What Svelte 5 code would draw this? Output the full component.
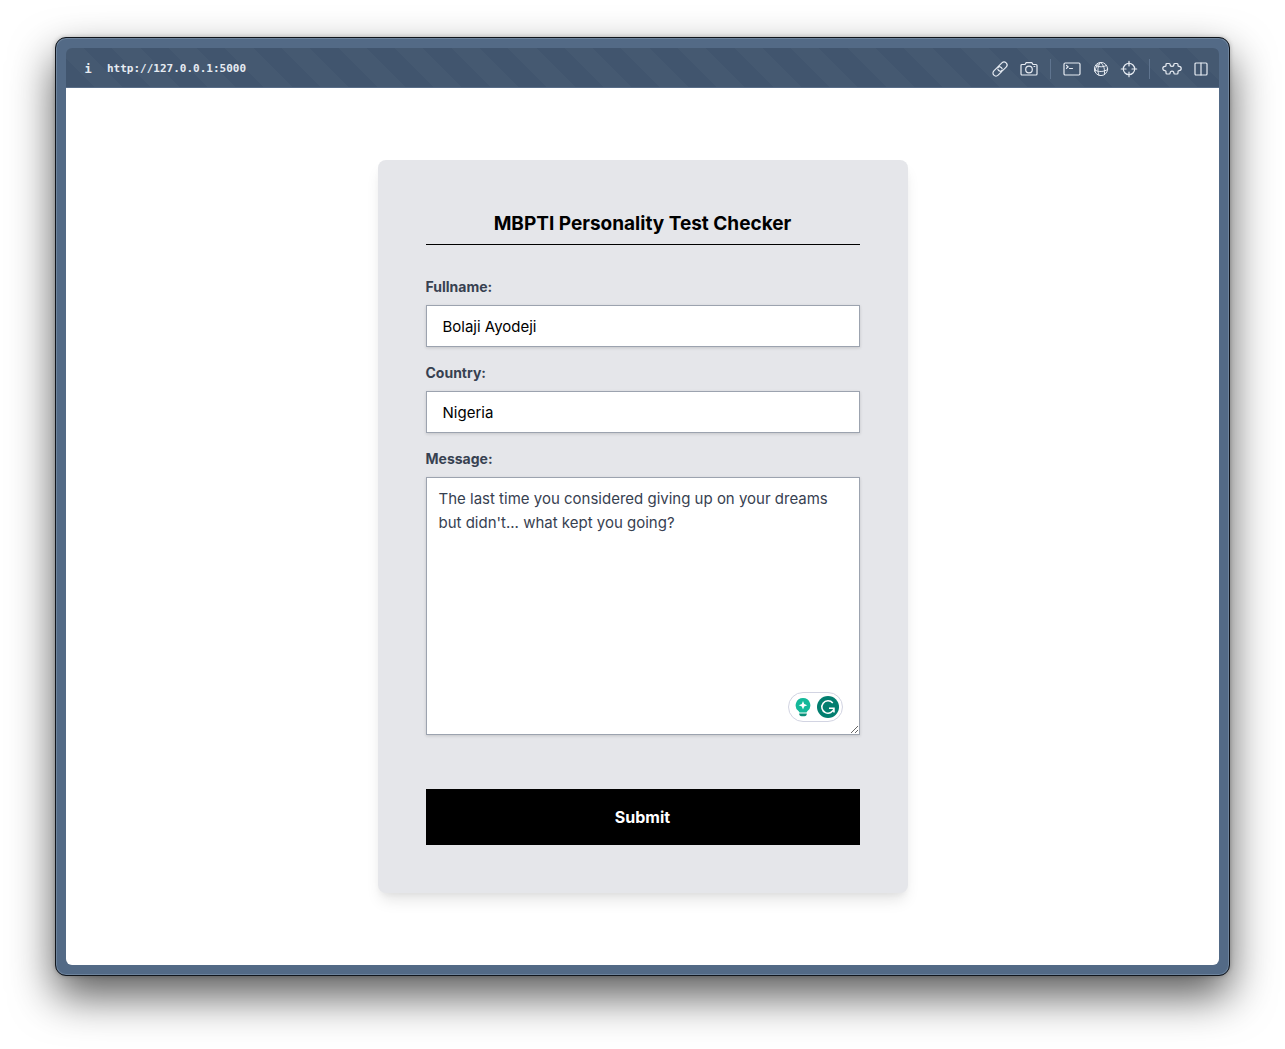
<script lang="ts">
  let fullname = $state('Bolaji Ayodeji');
  let country = $state('Nigeria');
  let message = $state('');
</script>

<div class="window">
  <header class="toolbar">
    <button class="info" type="button" aria-label="Site information">i</button>
    <a class="url" href="http://127.0.0.1:5000">http://127.0.0.1:5000</a>
    <nav class="tools" aria-label="Page tools">
      <button type="button" aria-label="Copy link">
        <svg width="16" height="16" viewBox="0 0 16 16">
          <g transform="rotate(-45 8 8)">
            <path d="M8.300 10.300A3 3 0 0 1 7 11H2.300a3 3 0 0 1 0-6H7a3 3 0 0 1 2.600 4.500" />
            <path d="M7.700 5.700A3 3 0 0 1 9 5h4.700a3 3 0 0 1 0 6H9a3 3 0 0 1-2.600-4.500" />
          </g>
        </svg>
      </button>
      <button type="button" aria-label="Screenshot">
        <svg width="18" height="16" viewBox="0 0 18 16">
          <path d="M2 3.500h3l1.200-1.800h5.600L13 3.500h3a1 1 0 0 1 1 1V13a1 1 0 0 1-1 1H2a1 1 0 0 1-1-1V4.500a1 1 0 0 1 1-1z" />
          <circle cx="9" cy="8.500" r="3.300" />
          <path d="M14 5.500h.8" />
        </svg>
      </button>
      <span class="divider"></span>
      <button type="button" aria-label="Console">
        <svg width="18" height="16" viewBox="0 0 18 16">
          <rect x="1" y="2" width="16" height="12" rx="1.200" />
          <path d="M3.500 4.500l1.700 1.400-1.700 1.400M6.500 7.500h3" />
        </svg>
      </button>
      <button type="button" aria-label="Network">
        <svg class="fine" width="16" height="16" viewBox="0 0 16 16">
          <circle cx="8" cy="8" r="6.600" />
          <path d="M7.500 1.500C4.500 5 4.200 10 6 14.300M7.500 1.500c3.300 2.500 4.800 7 3.800 12.200M2.500 4.500c3.500 1.800 8 1.800 11 0M1.500 9c4 2.200 9.500 2 13-.5M7.500 1.500C4.500 3 2.500 6 2 10.500" />
        </svg>
      </button>
      <button type="button" aria-label="Inspect element">
        <svg width="16" height="16" viewBox="0 0 16 16">
          <circle cx="8" cy="8" r="5.700" />
          <path d="M8 .3v4.700M8 11v4.700M.3 8H5M11 8h4.700" />
        </svg>
      </button>
      <span class="divider"></span>
      <button type="button" aria-label="Extensions">
        <svg width="20" height="16" viewBox="0 0 20 16">
          <path d="M5 2.500h2.200c.8 0 .9.500.9 1a1.900 1.900 0 0 0 3.800 0c0-.5.1-1 .9-1H15c.7 0 1 .3 1 1v1c0 .6.500.9 1.100.9a2.100 2.100 0 0 1 0 4.200c-.6 0-1.100.3-1.100.9v1.500c0 .7-.3 1-1 1h-2.200c-.8 0-.9-.5-.9-1a1.900 1.900 0 0 0-3.800 0c0 .5-.1 1-.9 1H5c-.7 0-1-.3-1-1v-1.500c0-.6-.5-.9-1.100-.9a2.100 2.100 0 0 1 0-4.200C3.500 5.400 4 5.100 4 4.500v-1c0-.7.300-1 1-1z" />
        </svg>
      </button>
      <button type="button" aria-label="Split view">
        <svg width="14" height="16" viewBox="0 0 14 16">
          <rect x="1" y="2" width="12" height="12" rx="1" />
          <path d="M7 2v12" />
        </svg>
      </button>
    </nav>
  </header>

  <main>
    <form class="card" onsubmit={(e) => e.preventDefault()}>
      <h1>MBPTI Personality Test Checker</h1>
      <div class="field">
        <label for="fullname">Fullname:</label>
        <input id="fullname" type="text" bind:value={fullname} />
      </div>
      <div class="field">
        <label for="country">Country:</label>
        <input id="country" type="text" bind:value={country} />
      </div>
      <div class="field">
        <label for="message">Message:</label>
        <div class="area">
          <textarea
            id="message"
            bind:value={message}
            placeholder="The last time you considered giving up on your dreams but didn't... what kept you going?"
          ></textarea>
          <div class="assistant">
            <svg width="16" height="20" viewBox="0 0 16 20" aria-hidden="true">
              <path fill="#15b99a" d="M8 1a7.300 7.300 0 0 0-4.300 13.200l.8 1.300h7l.8-1.300A7.300 7.300 0 0 0 8 1z" />
              <path fill="#fff" d="M8 4l1.200 3.100L12.300 8.300 9.200 9.500 8 12.600 6.800 9.500 3.700 8.300l3.100-1.200z" />
              <path fill="#0a8f78" d="M4.200 16.500h7.600c0 1.800-.8 2.700-2.300 2.700h-3c-1.500 0-2.300-.9-2.300-2.700z" />
            </svg>
            <svg width="22" height="22" viewBox="0 0 22 22" aria-hidden="true">
              <circle cx="11" cy="11" r="11" fill="#027e6f" />
              <path fill="none" stroke="#fff" stroke-width="1.500" d="M15.800 7A6.200 6.200 0 1 0 17.100 12.300M12 12.200h5v4.300" />
            </svg>
          </div>
        </div>
      </div>
      <button class="submit" type="submit">Submit</button>
    </form>
  </main>
</div>

<style>
  :global(body) {
    background: #fff;
    font-family: Inter, 'Liberation Sans', sans-serif;
  }

  :global(#app) {
    display: flow-root;
  }

  * {
    box-sizing: border-box;
  }

  .window {
    margin: 37px 55px 73px;
    padding: 9px;
    border: 1px solid #10151c;
    border-radius: 11px;
    background: #536a86;
    box-shadow:
      inset 0 0 0 1px #6d839c,
      0 0 4px rgba(0, 0, 0, 0.25),
      0 20px 44px rgba(0, 0, 0, 0.65);
  }

  .toolbar {
    display: flex;
    align-items: center;
    height: 40px;
    margin: 1px 1px 0;
    padding: 2px 11px 0 16px;
    border-bottom: 1px solid #586d88;
    border-radius: 6px 6px 0 0;
    background: repeating-linear-gradient(45deg, #41556e 0 20px, #455971 20px 40px);
    color: #e6ebf2;
    font-family: 'DejaVu Sans Mono', monospace;
  }

  .toolbar button {
    display: flex;
    padding: 0;
    border: 0;
    background: none;
    color: inherit;
  }

  .toolbar .info {
    justify-content: center;
    width: 12px;
    margin-right: 13px;
    font: bold 12px 'DejaVu Sans Mono', monospace;
  }

  .url {
    color: inherit;
    font-size: 11px;
    font-weight: bold;
    text-decoration: none;
  }

  .tools {
    display: flex;
    align-items: center;
    gap: 12px;
    margin-left: auto;
  }

  .tools svg {
    overflow: visible;
    fill: none;
    stroke: #e6ebf2;
    stroke-width: 1.2;
    stroke-linecap: round;
    stroke-linejoin: round;
  }

  .tools .fine {
    stroke-width: 1;
  }

  .divider {
    width: 1px;
    height: 20px;
    background: #5f748f;
  }

  main {
    display: flex;
    justify-content: center;
    margin: 0 1px 1px;
    padding: 72px 24px;
    border-radius: 0 0 6px 6px;
    background: #fff;
  }

  .card {
    width: 100%;
    max-width: 530px;
    padding: 48px;
    border-radius: 8px;
    background: #e5e6ea;
    box-shadow:
      0 10px 15px -3px rgba(0, 0, 0, 0.1),
      0 4px 6px -2px rgba(0, 0, 0, 0.05);
  }

  h1 {
    margin: 0 0 32px;
    padding: 2px 0 6px;
    border-bottom: 1px solid #000;
    font-size: 19px;
    font-weight: 700;
    line-height: 28px;
    text-align: center;
  }

  .field {
    margin-bottom: 16px;
  }

  label {
    display: block;
    margin-bottom: 8px;
    color: #374151;
    font-size: 14px;
    font-weight: 700;
    line-height: 20px;
  }

  input,
  textarea {
    display: block;
    width: 100%;
    border: 1px solid #9ca3af;
    border-radius: 0;
    background: #fff;
    box-shadow: 0 1px 3px rgba(0, 0, 0, 0.15);
    color: #000;
    font-family: inherit;
    font-size: 15px;
    line-height: 24px;
    outline: none;
  }

  input {
    height: 42px;
    padding: 8px 16px;
  }

  textarea {
    height: 258px;
    padding: 9px 12px 8px;
    resize: vertical;
  }

  textarea::placeholder {
    color: #374151;
    opacity: 1;
  }

  .area {
    position: relative;
  }

  .assistant {
    position: absolute;
    right: 17px;
    bottom: 13px;
    display: flex;
    align-items: center;
    gap: 6px;
    height: 30px;
    padding: 0 3px 0 6px;
    border: 1px solid #d2d4e2;
    border-radius: 15px;
    background: #fff;
  }

  .submit {
    display: block;
    width: 100%;
    height: 56px;
    margin-top: 54px;
    border: 0;
    background: #000;
    color: #fff;
    font-family: inherit;
    font-size: 16px;
    font-weight: 700;
  }
</style>
